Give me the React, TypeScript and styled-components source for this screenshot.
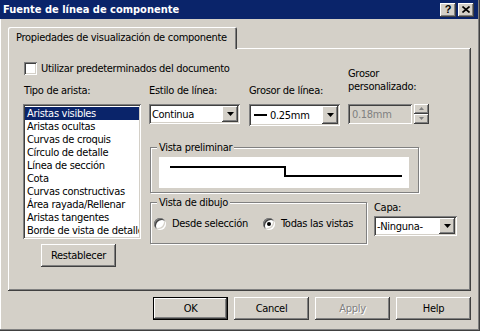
import React from "react";
import styled, { createGlobalStyle } from "styled-components";

const UI_FONT = `"DejaVu Sans Condensed", "Liberation Sans", Arial, sans-serif`;

const GlobalStyle = createGlobalStyle`
  html, body { margin: 0; padding: 0; background: #d4d0c8; }
  body { font-family: ${UI_FONT}; font-size: 11px; letter-spacing: -0.3px; color: #000; }
  * { box-sizing: border-box; }
`;

const raised = `box-shadow: inset -1px -1px #404040, inset 1px 1px #fff, inset -2px -2px #808080, inset 2px 2px #d4d0c8;`;
const sunken = `box-shadow: inset 1px 1px #808080, inset -1px -1px #fff, inset 2px 2px #404040, inset -2px -2px #d4d0c8;`;

const Window = styled.div`
    width: 480px;
    height: 331px;
    background: #d4d0c8;
    box-shadow: inset -1px -1px #404040, inset -2px -2px #808080, inset 1px 0 #fff;
    display: flex;
    flex-direction: column;
`;

const TitleBar = styled.div`
    height: 19px;
    margin-right: 2px;
    background: #0a246a;
    display: flex;
    align-items: center;
    justify-content: space-between;
    padding: 0 4px 0 3px;
`;

const Title = styled.div`
    color: #fff;
    font-weight: bold;
    font-size: 11px;
    letter-spacing: 0;
    white-space: nowrap;
`;

const TitleButtons = styled.div`
    display: flex;
    gap: 2px;
`;

const CaptionButton = styled.div`
    width: 16px;
    height: 14px;
    background: #d4d0c8;
    ${raised}
    display: flex;
    align-items: center;
    justify-content: center;
    font-weight: bold;
    font-size: 11px;
    font-family: "Liberation Sans", Arial, sans-serif;
    line-height: 14px;
    padding-bottom: 1px;
`;

const Body = styled.div`
    padding: 8px 9px 0 8px;
    display: flex;
    flex-direction: column;
`;

const TabStrip = styled.div`
    display: flex;
    position: relative;
    z-index: 1;
    margin-bottom: -1px;
`;

const Tab = styled.div`
    width: 229px;
    height: 22px;
    background: #d4d0c8;
    border-radius: 2px 2px 0 0;
    box-shadow: inset 1px 1px #fff, inset -1px 0 #404040, inset -2px 0 #808080;
    padding: 4px 0 0 8px;
    line-height: 13px;
    white-space: nowrap;
`;

const TabPanel = styled.div`
    height: 243px;
    ${raised}
    padding: 14px 0 0 15px;
    display: flex;
    flex-direction: column;
`;

const CheckRow = styled.label`
    display: flex;
    align-items: center;
    gap: 4px;
    height: 13px;
    margin-left: 1px;
    line-height: 13px;
`;

const CheckBox = styled.span`
    width: 13px;
    height: 13px;
    background: #fff;
    ${sunken}
`;

const Columns = styled.div`
    display: flex;
    gap: 8px;
    margin-top: 9px;
`;

const LeftCol = styled.div`
    width: 118px;
    display: flex;
    flex-direction: column;
`;

const FieldLabel = styled.div<{ $indent?: number; $lift?: number }>`
    line-height: 13px;
    white-space: nowrap;
    padding-left: ${(p) => p.$indent ?? 1}px;
    margin-bottom: ${(p) => p.$lift ?? 0}px;
`;

const ListBox = styled.div`
    margin-top: 7px;
    height: 135px;
    background: #fff;
    ${sunken}
    padding: 3px 2px 2px 2px;
    overflow: hidden;
`;

const ListItem = styled.div<{ $selected?: boolean }>`
    height: 13px;
    line-height: 13px;
    padding-left: 2px;
    white-space: nowrap;
    overflow: hidden;
    background: ${(p) => (p.$selected ? "#0a246a" : "transparent")};
    color: ${(p) => (p.$selected ? "#fff" : "#000")};
`;

const PushButton = styled.div<{ $default?: boolean; $disabled?: boolean }>`
    width: 75px;
    height: 23px;
    background: #d4d0c8;
    display: flex;
    align-items: center;
    justify-content: center;
    box-shadow: ${(p) =>
        p.$default
            ? "inset 0 0 0 1px #000, inset -2px -2px #404040, inset 2px 2px #fff, inset -3px -3px #808080"
            : "inset -1px -1px #404040, inset 1px 1px #fff, inset -2px -2px #808080"};
    color: ${(p) => (p.$disabled ? "#808080" : "#000")};
    text-shadow: ${(p) => (p.$disabled ? "1px 1px #fff" : "none")};
`;

const ResetButton = styled(PushButton)`
    margin: 5px 0 0 18px;
`;

const RightCol = styled.div`
    width: 310px;
    display: flex;
    flex-direction: column;
`;

const LabelRow = styled.div`
    height: 13px;
    display: flex;
    align-items: flex-end;
`;

const LabelCell = styled.div<{ $w: number }>`
    width: ${(p) => p.$w}px;
`;

const ControlRow = styled.div`
    margin-top: 7px;
    display: flex;
    align-items: flex-start;
`;

const Combo = styled.div<{ $w: number; $h: number; $gap?: number }>`
    width: ${(p) => p.$w}px;
    height: ${(p) => p.$h}px;
    margin-right: ${(p) => p.$gap ?? 0}px;
    background: #fff;
    ${sunken}
    padding: 2px;
    display: flex;
    align-items: stretch;
`;

const ComboText = styled.div<{ $pad?: number }>`
    flex: 1;
    display: flex;
    align-items: center;
    gap: 3px;
    padding-left: ${(p) => p.$pad ?? 1}px;
    white-space: nowrap;
    overflow: hidden;
`;

const LineSwatch = styled.span`
    width: 13px;
    height: 2px;
    background: #000;
`;

const ArrowButton = styled.div`
    width: 16px;
    background: #d4d0c8;
    ${raised}
    display: flex;
    align-items: center;
    justify-content: center;
`;

const TextField = styled.div`
    width: 64px;
    height: 20px;
    margin-right: 2px;
    ${sunken}
    padding-left: 4px;
    display: flex;
    align-items: center;
    color: #808080;
`;

const Spinner = styled.div`
    width: 15px;
    height: 20px;
    display: flex;
    flex-direction: column;
`;

const SpinButton = styled.div`
    flex: 1;
    background: #d4d0c8;
    ${raised}
    display: flex;
    align-items: center;
    justify-content: center;
`;

const Group = styled.fieldset<{ $w: number; $h?: number }>`
    margin: 0 0 0 1px;
    padding: 0;
    min-inline-size: 0;
    width: ${(p) => p.$w}px;
    ${(p) => (p.$h ? `height: ${p.$h}px;` : "")}
    border: 1px solid #808080;
    box-shadow: inset 1px 1px #fff, 1px 1px #fff;
`;

const Legend = styled.legend`
    margin-left: 6px;
    padding: 0 2px;
    background: #d4d0c8;
    line-height: 13px;
    white-space: nowrap;
`;

const PreviewGroup = styled(Group)`
    margin-top: 15px;
`;

const PreviewArea = styled.div`
    margin: 3px 9px 4px 8px;
    height: 31px;
    background: #fff;
    display: flex;
`;

const LowerRow = styled.div`
    margin-top: 3px;
    display: flex;
    gap: 7px;
`;

const RadioRow = styled.div`
    display: flex;
    align-items: center;
    margin: 8px 0 0 3px;
    height: 13px;
`;

const RadioOption = styled.label<{ $w?: number }>`
    display: flex;
    align-items: center;
    gap: 6px;
    ${(p) => (p.$w ? `width: ${p.$w}px;` : "")}
    white-space: nowrap;
`;

const RadioCircle = styled.span<{ $checked?: boolean }>`
    width: 12px;
    height: 12px;
    border-radius: 50%;
    background: #fff;
    box-shadow: inset 1px 1px #808080, inset -1px -1px #fff, inset 2px 2px #404040, inset -2px -2px #d4d0c8;
    display: flex;
    align-items: center;
    justify-content: center;
    &::after {
        content: "";
        width: 4px;
        height: 4px;
        border-radius: 50%;
        background: ${(p) => (p.$checked ? "#000" : "transparent")};
    }
`;

const CapaCol = styled.div`
    display: flex;
    flex-direction: column;
    padding-top: 5px;
`;

const ButtonRow = styled.div`
    margin-top: 6px;
    display: flex;
    justify-content: flex-end;
    gap: 6px;
`;

const DownArrow = () => (
    <svg width="7" height="4" viewBox="0 0 7 4">
        <path d="M0 0h7L3.5 4z" fill="#000" />
    </svg>
);

const SpinArrow = ({ up }: { up?: boolean }) => (
    <svg width="5" height="4" viewBox="0 0 5 4">
        <path d={up ? "M0 3h5L2.5 0z" : "M0 0h5L2.5 3z"} fill="#808080" />
    </svg>
);

const edgeTypes = [
    "Aristas visibles",
    "Aristas ocultas",
    "Curvas de croquis",
    "Círculo de detalle",
    "Línea de sección",
    "Cota",
    "Curvas constructivas",
    "Área rayada/Rellenar",
    "Aristas tangentes",
    "Borde de vista de detalle",
];

const App = () => {
    return <>
        <GlobalStyle />
        <Window>
            <TitleBar>
                <Title>Fuente de línea de componente</Title>
                <TitleButtons>
                    <CaptionButton>?</CaptionButton>
                    <CaptionButton>
                        <svg width="8" height="7" viewBox="0 0 8 7">
                            <path d="M0.5 0.5L7.5 6.5M7.5 0.5L0.5 6.5" stroke="#000" strokeWidth="1.6" />
                        </svg>
                    </CaptionButton>
                </TitleButtons>
            </TitleBar>
            <Body>
                <TabStrip>
                    <Tab>Propiedades de visualización de componente</Tab>
                </TabStrip>
                <TabPanel>
                    <CheckRow>
                        <CheckBox />
                        Utilizar predeterminados del documento
                    </CheckRow>
                    <Columns>
                        <LeftCol>
                            <FieldLabel>Tipo de arista:</FieldLabel>
                            <ListBox>
                                {edgeTypes.map((t, i) => (
                                    <ListItem key={t} $selected={i === 0}>{t}</ListItem>
                                ))}
                            </ListBox>
                            <ResetButton>Restablecer</ResetButton>
                        </LeftCol>
                        <RightCol>
                            <LabelRow>
                                <LabelCell $w={100}><FieldLabel $indent={0}>Estilo de línea:</FieldLabel></LabelCell>
                                <LabelCell $w={99}><FieldLabel $indent={0}>Grosor de línea:</FieldLabel></LabelCell>
                                <LabelCell $w={100}>
                                    <FieldLabel $indent={0} $lift={4}>Grosor<br />personalizado:</FieldLabel>
                                </LabelCell>
                            </LabelRow>
                            <ControlRow>
                                <Combo $w={91} $h={20} $gap={9}>
                                    <ComboText>Continua</ComboText>
                                    <ArrowButton><DownArrow /></ArrowButton>
                                </Combo>
                                <Combo $w={91} $h={22} $gap={8}>
                                    <ComboText $pad={3}><LineSwatch />0.25mm</ComboText>
                                    <ArrowButton><DownArrow /></ArrowButton>
                                </Combo>
                                <TextField>0.18mm</TextField>
                                <Spinner>
                                    <SpinButton><SpinArrow up /></SpinButton>
                                    <SpinButton><SpinArrow /></SpinButton>
                                </Spinner>
                            </ControlRow>
                            <PreviewGroup $w={269}>
                                <Legend>Vista preliminar</Legend>
                                <PreviewArea>
                                    <svg width="250" height="31" viewBox="0 0 250 31">
                                        <path d="M11 10H126V19H243" fill="none" stroke="#000" strokeWidth="2" />
                                    </svg>
                                </PreviewArea>
                            </PreviewGroup>
                            <LowerRow>
                                <Group $w={217} $h={48}>
                                    <Legend>Vista de dibujo</Legend>
                                    <RadioRow>
                                        <RadioOption $w={109}>
                                            <RadioCircle />
                                            Desde selección
                                        </RadioOption>
                                        <RadioOption>
                                            <RadioCircle $checked />
                                            Todas las vistas
                                        </RadioOption>
                                    </RadioRow>
                                </Group>
                                <CapaCol>
                                    <FieldLabel $indent={0}>Capa:</FieldLabel>
                                    <ControlRow style={{ marginTop: 2 }}>
                                        <Combo $w={83} $h={20}>
                                            <ComboText>-Ninguna-</ComboText>
                                            <ArrowButton><DownArrow /></ArrowButton>
                                        </Combo>
                                    </ControlRow>
                                </CapaCol>
                            </LowerRow>
                        </RightCol>
                    </Columns>
                </TabPanel>
                <ButtonRow>
                    <PushButton $default>OK</PushButton>
                    <PushButton>Cancel</PushButton>
                    <PushButton $disabled>Apply</PushButton>
                    <PushButton>Help</PushButton>
                </ButtonRow>
            </Body>
        </Window>
    </>;
};

export default App;
